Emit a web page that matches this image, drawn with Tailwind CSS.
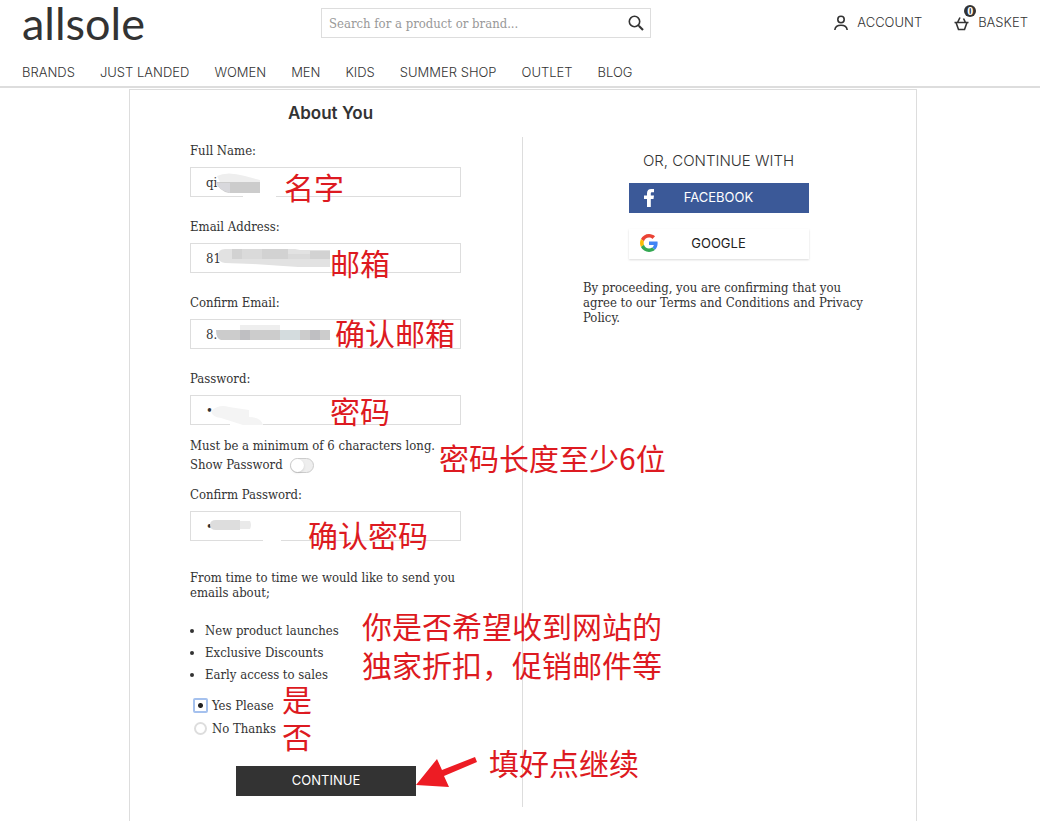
<!DOCTYPE html>
<html lang="en">
<head>
  <meta charset="UTF-8" />
  <meta name="viewport" content="width=device-width, initial-scale=1.0" />
  <title>About You | AllSole</title>
  <script src="https://cdn.jsdelivr.net/npm/@tailwindcss/browser@4"></script>
</head>
<body class="bg-white text-[#333] text-[13px] font-['DejaVu_Serif_Condensed','DejaVu_Serif','Noto_Sans_CJK_SC',serif]">

  <!-- Header -->
  <header class="border-b-2 border-[#ddd] font-['Inter','Noto_Sans',sans-serif]">
    <div class="grid grid-cols-[299px_330px_1fr] items-center pl-[22px] pr-3 h-[46px]">
      <a href="#" class="text-[45px] leading-[46px] font-['Lato',sans-serif]">allsole</a>
      <form class="relative">
        <input type="search" aria-label="Search" placeholder="Search for a product or brand..." class="block w-full h-[30px] border border-[#ddd] pl-[7px] pr-9 text-[13px] placeholder:text-[#999] font-['DejaVu_Serif_Condensed','DejaVu_Serif',serif]" />
        <button type="submit" aria-label="Search" class="absolute right-1.5 top-1.5">
          <svg class="w-[18px] h-[18px]" viewBox="0 0 18 18" fill="none" stroke="#333" stroke-width="1.6"><circle cx="7.5" cy="7.5" r="5.2" /><path d="M11 11l1.5 1.5" stroke-width="1.2" /><path d="M12 12l4 4" stroke-width="2.2" /></svg>
        </button>
      </form>
      <div class="flex justify-end items-center gap-8 text-[13px] font-light">
        <a href="#" class="flex items-center gap-2">
          <svg class="w-4 h-4" viewBox="0 0 16 16" fill="none" stroke="#333" stroke-width="1.6"><circle cx="8" cy="4.5" r="3.2" /><path d="M1.8 15c.4-3.4 3-4.700 6.200-4.700s5.800 1.300 6.200 4.700" /></svg>
          ACCOUNT
        </a>
        <a href="#" class="relative flex items-center gap-2">
          <svg class="w-4 h-4" viewBox="0 0 16 16" fill="none" stroke="#333" stroke-width="1.6"><path d="M.5 7.500h14M2 7.500l2.500 7h6l2.500-7M3.500 7.500l2.500-5M11.500 7.500l-2-4" /></svg>
          BASKET
          <span class="absolute left-2.5 -top-2 w-3 h-3 rounded-full bg-[#333] text-white text-xs leading-3 text-center font-bold font-['Liberation_Serif',serif]">0</span>
        </a>
      </div>
    </div>
    <nav class="flex gap-[25px] pl-[22px] pt-[17px] pb-[5px] text-[13px] leading-[18px] font-light">
      <a href="#">BRANDS</a>
      <a href="#">JUST LANDED</a>
      <a href="#">WOMEN</a>
      <a href="#">MEN</a>
      <a href="#">KIDS</a>
      <a href="#">SUMMER SHOP</a>
      <a href="#">OUTLET</a>
      <a href="#">BLOG</a>
    </nav>
  </header>

  <main class="ml-[129px] mr-[123px] mt-px border border-b-0 border-[#ddd] pb-4">
    <div class="grid grid-cols-2">
      <h1 class="pt-[11px] pl-2 h-[47px] text-center text-[17px] leading-6 font-semibold font-['Inter',sans-serif]">About You</h1>
    </div>
    <div class="grid grid-cols-2">

      <!-- Sign up form -->
      <form class="pl-[60px] pr-[61px] pt-1.5 pb-[11px] border-r border-[#ddd]">
        <div class="relative mb-[22px]">
          <label for="name" class="block leading-4 mb-2">Full Name:</label>
          <input id="name" type="text" value="qi" class="block w-full h-[30px] border border-[#ddd] px-[15px]" />
          <svg class="absolute left-[25px] top-7 w-[62px] h-7" viewBox="0 0 62 28"><path fill="#fff" d="M28 24h33v4H28z" /><path fill="#eee" d="M2 5q10-5 28 0l15 4v4H6z" /><path fill="#ccc" d="M1 11h44v11H14Q4 20 1 11z" /><path fill="#d8d8dc" d="M1 12h14v10Q4 19 1 12z" /></svg>
          <span class="absolute left-[94px] top-6 text-[30px] leading-[38px] text-[#dd1a21] whitespace-nowrap font-['Noto_Sans_CJK_SC',sans-serif]">名字</span>
        </div>
        <div class="relative mb-[22px]">
          <label for="email" class="block leading-4 mb-2">Email Address:</label>
          <input id="email" type="text" value="81" class="block w-full h-[30px] border border-[#ddd] px-[15px]" />
          <svg class="absolute left-[28px] top-[30px] w-[112px] h-[18px]" viewBox="0 0 112 18"><path fill="#e2e2e2" d="M0 7q0-7 7-7h70l5 1h30v17H80L35 15 7 14q-7-1-7-7z" /><path fill="#d2d2d2" d="M14 0h56v10H14zM92 2h20v8H92z" /><path fill="#dadada" d="M24 0h20v10H24zM70 5h22v5H70z" /></svg>
          <span class="absolute left-[140px] top-6 text-[30px] leading-[38px] text-[#dd1a21] whitespace-nowrap font-['Noto_Sans_CJK_SC',sans-serif]">邮箱</span>
        </div>
        <div class="relative mb-[22px]">
          <label for="confirm-email" class="block leading-4 mb-2">Confirm Email:</label>
          <input id="confirm-email" type="text" value="8." class="block w-full h-[30px] border border-[#ddd] px-[15px]" />
          <svg class="absolute left-[26px] top-[29px] w-[114px] h-[18px]" viewBox="0 0 114 18"><path fill="#eee" d="M24 1h40v6H24z" /><path fill="#ccc" d="M0 6h114v10H5Q0 15 0 6z" /><path fill="#bfbfc2" d="M24 6h10v10H24zM94 6h10v10H94z" /><path fill="#d4dcde" d="M64 6h20v10H64z" /></svg>
          <span class="absolute left-[145px] top-[18px] text-[30px] leading-[38px] text-[#dd1a21] whitespace-nowrap font-['Noto_Sans_CJK_SC',sans-serif]">确认邮箱</span>
        </div>
        <div class="relative">
          <label for="password" class="block leading-4 mb-2">Password:</label>
          <input id="password" type="password" value="1" class="block w-full h-[30px] border border-[#ddd] px-[15px]" />
          <svg class="absolute left-[21px] top-8 w-[54px] h-6" viewBox="0 0 54 24"><path fill="#fff" d="M19 20h33v4H19z" /><path fill="#f4f4f4" d="M0 8q8-7 18-4l20 3v7q12 0 14 8H32L10 15q-9-1-10-7z" /></svg>
          <span class="absolute left-[140px] top-5 text-[30px] leading-[38px] text-[#dd1a21] whitespace-nowrap font-['Noto_Sans_CJK_SC',sans-serif]">密码</span>
        </div>
        <div class="relative pt-3 pb-3">
          <p class="leading-[18px] whitespace-nowrap">Must be a minimum of 6 characters long.</p>
          <label class="flex items-center gap-[7px] leading-5">
            Show Password
            <input type="checkbox" class="appearance-none w-6 h-[15px] rounded-full border border-[#ccc] bg-[#eee] before:block before:w-[13px] before:h-[13px] before:rounded-full before:bg-white before:shadow" />
          </label>
          <span class="absolute left-[249px] top-3 text-[30px] leading-[40px] text-[#dd1a21] whitespace-nowrap font-['Noto_Sans_CJK_SC',sans-serif]">密码长度至少6位</span>
        </div>
        <div class="relative mb-[29px]">
          <label for="confirm-password" class="block leading-4 mb-2">Confirm Password:</label>
          <input id="confirm-password" type="password" value="1" class="block w-full h-[30px] border border-[#ddd] px-[15px]" />
          <svg class="absolute left-[20px] top-8 w-[74px] h-6" viewBox="0 0 74 24"><path fill="#fff" d="M53 20h18v4H53z" /><path fill="#ddd" d="M0 6q0-5 6-5h24v10H6q-6 0-6-5z" /><path fill="#eaeaea" d="M30 2h10q2 4 0 8H30z" /></svg>
          <span class="absolute left-[118px] top-7 text-[30px] leading-[38px] text-[#dd1a21] whitespace-nowrap font-['Noto_Sans_CJK_SC',sans-serif]">确认密码</span>
        </div>

        <p class="-mr-3 leading-[15px]">From time to time we would like to send you emails about;</p>
        <div class="relative mt-5">
          <ul class="list-disc pl-[15px] leading-[22px]">
            <li>New product launches</li>
            <li>Exclusive Discounts</li>
            <li>Early access to sales</li>
          </ul>
          <p class="absolute left-[172px] -top-3.5 text-[30px] leading-[39px] text-[#dd1a21] whitespace-nowrap font-['Noto_Sans_CJK_SC',sans-serif]">你是否希望收到网站的<br />独家折扣，促销邮件等</p>
        </div>
        <div class="relative mt-2 pl-[3px] leading-[23px]">
          <label class="flex items-center gap-1">
            <input type="radio" name="emails" checked class="appearance-none w-[15px] h-[15px] rounded-xs border-2 border-[#a5c1ee] bg-[radial-gradient(circle,#222_2px,#fff_3px)]" />
            Yes Please
          </label>
          <label class="flex items-center gap-1">
            <input type="radio" name="emails" class="appearance-none w-[13px] h-[13px] mx-px rounded-full border-2 border-[#ddd]" />
            No Thanks
          </label>
          <p class="absolute left-[92px] -top-3.5 text-[30px] leading-[37px] text-[#dd1a21] whitespace-nowrap font-['Noto_Sans_CJK_SC',sans-serif]">是<br />否</p>
        </div>
        <div class="relative mt-[26px] pl-[46px] pr-[45px]">
          <button type="submit" class="block w-full h-[30px] bg-[#333] text-white text-[13px] font-['Inter',sans-serif]">CONTINUE</button>
          <svg class="absolute left-[226px] -top-3 w-[62px] h-9" viewBox="0 0 62 36" fill="#ed1c24"><path d="M0 31L21 5l5 11L59 3l2 5-33 14 5 11z" /></svg>
          <span class="absolute left-[299px] -top-6 text-[30px] leading-[40px] text-[#dd1a21] whitespace-nowrap font-['Noto_Sans_CJK_SC',sans-serif]">填好点继续</span>
        </div>
      </form>

      <!-- Social sign in -->
      <section class="pl-[60px] pr-[46px] pt-3.5">
        <div class="flex flex-col items-center pr-4 text-[13px] font-['Inter',sans-serif]">
          <h2 class="text-[15px] leading-5 font-light">OR, CONTINUE WITH</h2>
          <button type="button" class="relative mt-3 w-[180px] h-[30px] bg-[#3b5998] text-white">
            <svg class="absolute left-3.5 top-1.5 w-3 h-[18px]" viewBox="0 0 12 18" fill="#fff"><path d="M4 18V10H1V6.500h3V4.200C4 1.500 5.500 0 8.200 0h2.800v3.200H9.300C8.200 3.200 7.800 3.700 7.800 4.600v1.900H11L10.500 10H7.800v8z" /></svg>
            FACEBOOK
          </button>
          <button type="button" class="relative mt-4 w-[180px] h-[30px] bg-white text-[#222] shadow-[0_1px_2px_rgba(0,0,0,0.15)]">
            <svg class="absolute left-[11px] top-[5px] w-[18px] h-[18px]" viewBox="0 0 48 48">
              <path fill="#EA4335" d="M24 9.500c3.540 0 6.710 1.220 9.210 3.600l6.850-6.850C35.900 2.380 30.470 0 24 0 14.620 0 6.510 5.380 2.560 13.220l7.980 6.190C12.430 13.720 17.740 9.500 24 9.500z" />
              <path fill="#4285F4" d="M46.980 24.550c0-1.570-.15-3.090-.38-4.550H24v9.020h12.940c-.58 2.960-2.260 5.480-4.780 7.180l7.730 6c4.510-4.180 7.090-10.360 7.090-17.650z" />
              <path fill="#FBBC05" d="M10.530 28.590A14.500 14.500 0 0 1 9.770 24c0-1.600.28-3.140.76-4.590l-7.980-6.190A23.900 23.900 0 0 0 0 24c0 3.880.92 7.540 2.560 10.780z" />
              <path fill="#34A853" d="M24 48c6.480 0 11.930-2.130 15.890-5.810l-7.730-6c-2.150 1.450-4.920 2.300-8.160 2.300-6.260 0-11.570-4.220-13.470-9.910l-7.980 6.190C6.510 42.620 14.620 48 24 48z" />
            </svg>
            GOOGLE
          </button>
        </div>
        <p class="mt-[21px] leading-[15px]">By proceeding, you are confirming that you agree to our Terms and Conditions and Privacy Policy.</p>
      </section>
    </div>
  </main>

</body>
</html>
